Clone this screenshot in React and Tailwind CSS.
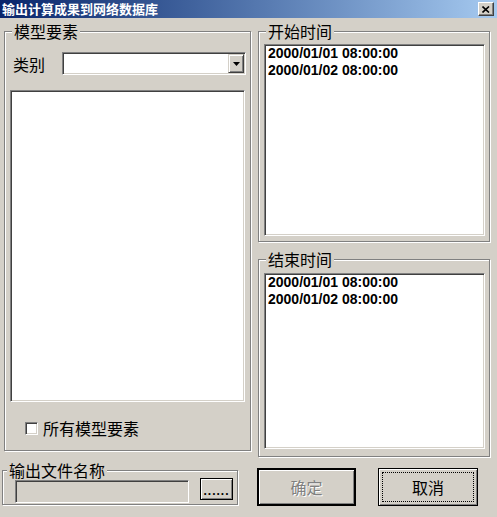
import React from "react";

const cjk = "font-['Noto_Sans_CJK_SC',sans-serif]";
const sunken =
  "border border-t-[#808080] border-l-[#808080] border-b-white border-r-white shadow-[inset_1px_1px_0_#404040,inset_-1px_-1px_0_#d4d0c8]";
const etched = "border border-[#808080] shadow-[inset_1px_1px_0_#ffffff,1px_1px_0_#ffffff]";

function GroupLabel({ children, left = 7 }) {
  return (
    <span
      className={`absolute top-[-10px] bg-[#d4d0c8] px-[2px] text-[16px] leading-[18px] text-black ${cjk}`}
      style={{ left }}
    >
      {children}
    </span>
  );
}

function DateList({ h }) {
  return (
    <div
      className={`${sunken} bg-white w-[221px] pl-[3px] font-['Liberation_Sans',Arial,sans-serif] font-bold text-[14px] leading-[17px] text-black`}
      style={{ height: h }}
    >
      <div>2000/01/01 08:00:00</div>
      <div>2000/01/02 08:00:00</div>
    </div>
  );
}

export default function App() {
  return (
    <div className={`w-[497px] h-[517px] bg-[#d4d0c8] overflow-hidden ${cjk}`}>
      {/* Title bar */}
      <div className="h-[18px] flex items-center justify-between bg-gradient-to-r from-[#0a246a] to-[#a6caf0] pl-[2px] pr-[3px]">
        <span className="text-white font-bold text-[13px] leading-[18px] tracking-[0px]">
          输出计算成果到网络数据库
        </span>
        <div className="w-[16px] h-[14px] bg-[#d4d0c8] border border-t-white border-l-white border-b-[#404040] border-r-[#404040] shadow-[inset_-1px_-1px_0_#808080] flex items-center justify-center">
          <svg width="8" height="7" viewBox="0 0 8 7">
            <path d="M0.5 0.5 L7 6.5 M7 0.5 L0.5 6.5" stroke="#000" strokeWidth="1.6" />
          </svg>
        </div>
      </div>

      {/* Top section */}
      <div className="flex pl-[4px] pt-[13px]">
        {/* Left group */}
        <div className={`relative w-[247px] h-[420px] ${etched}`}>
          <GroupLabel>模型要素</GroupLabel>
          <div className="flex flex-col pl-[5px] pt-[20px]">
            <div className="flex items-center h-[23px]">
              <span className="ml-[3px] w-[49px] text-[16px] leading-[18px]">类别</span>
              <div className={`${sunken} bg-white w-[184px] h-[23px] flex justify-end items-start p-[1px]`}>
                <div className="w-[16px] h-[19px] bg-[#d4d0c8] border border-t-[#d4d0c8] border-l-[#d4d0c8] border-b-[#404040] border-r-[#404040] shadow-[inset_1px_1px_0_#ffffff,inset_-1px_-1px_0_#808080] flex items-center justify-center">
                  <svg width="7" height="4" viewBox="0 0 7 4">
                    <path d="M0 0 H7 L3.5 4 Z" fill="#000" />
                  </svg>
                </div>
              </div>
            </div>
            <div className={`${sunken} bg-white w-[235px] h-[312px] mt-[15px]`} />
            <div className="flex items-center mt-[17px] pl-[15px] h-[18px]">
              <div className={`${sunken} bg-white w-[13px] h-[13px]`} />
              <span className="ml-[5px] text-[16px] leading-[18px]">所有模型要素</span>
            </div>
          </div>
        </div>

        {/* Right column */}
        <div className="ml-[7px] w-[232px] flex flex-col">
          <div className={`relative h-[211px] ${etched}`}>
            <GroupLabel>开始时间</GroupLabel>
            <div className="pl-[5px] pt-[12px]">
              <DateList h={192} />
            </div>
          </div>
          <div className={`relative mt-[17px] h-[198px] ${etched}`}>
            <GroupLabel>结束时间</GroupLabel>
            <div className="pl-[5px] pt-[13px]">
              <DateList h={176} />
            </div>
          </div>
        </div>
      </div>

      {/* Bottom row */}
      <div className="flex items-start pl-[2px] mt-[11px]">
        <div className={`relative mt-[2px] w-[236px] h-[35px] ${etched}`}>
          <GroupLabel left={4}>输出文件名称</GroupLabel>
          <div className="flex items-start pl-[12px] pt-[7px]">
            <div className={`${sunken} bg-[#d4d0c8] w-[174px] h-[23px] mt-[2px]`} />
            <div className="ml-[11px] w-[33px] h-[22px] border border-black bg-[#d4d0c8] shadow-[inset_1px_1px_0_#ffffff,inset_-1px_-1px_0_#808080] flex items-center justify-center">
              <span className="font-['Liberation_Sans',Arial,sans-serif] font-bold text-[12px] leading-none tracking-[1px] mt-[3px]">
                ......
              </span>
            </div>
          </div>
        </div>

        <div className="ml-[19px] w-[99px] h-[38px] border-2 border-black bg-[#d4d0c8] shadow-[inset_1px_1px_0_#ffffff,inset_-1px_-1px_0_#808080] flex items-center justify-center">
          <span className="text-[16px] leading-[18px] text-[#808080] [text-shadow:1px_1px_0_#ffffff]">确定</span>
        </div>

        <div className="ml-[22px] w-[100px] h-[38px] border border-black bg-[#d4d0c8] shadow-[inset_1px_1px_0_#ffffff,inset_-1px_-1px_0_#808080] p-[3px]">
          <div className="w-full h-full border border-dotted border-black flex items-center justify-center">
            <span className="text-[16px] leading-[18px] text-black">取消</span>
          </div>
        </div>
      </div>
    </div>
  );
}
